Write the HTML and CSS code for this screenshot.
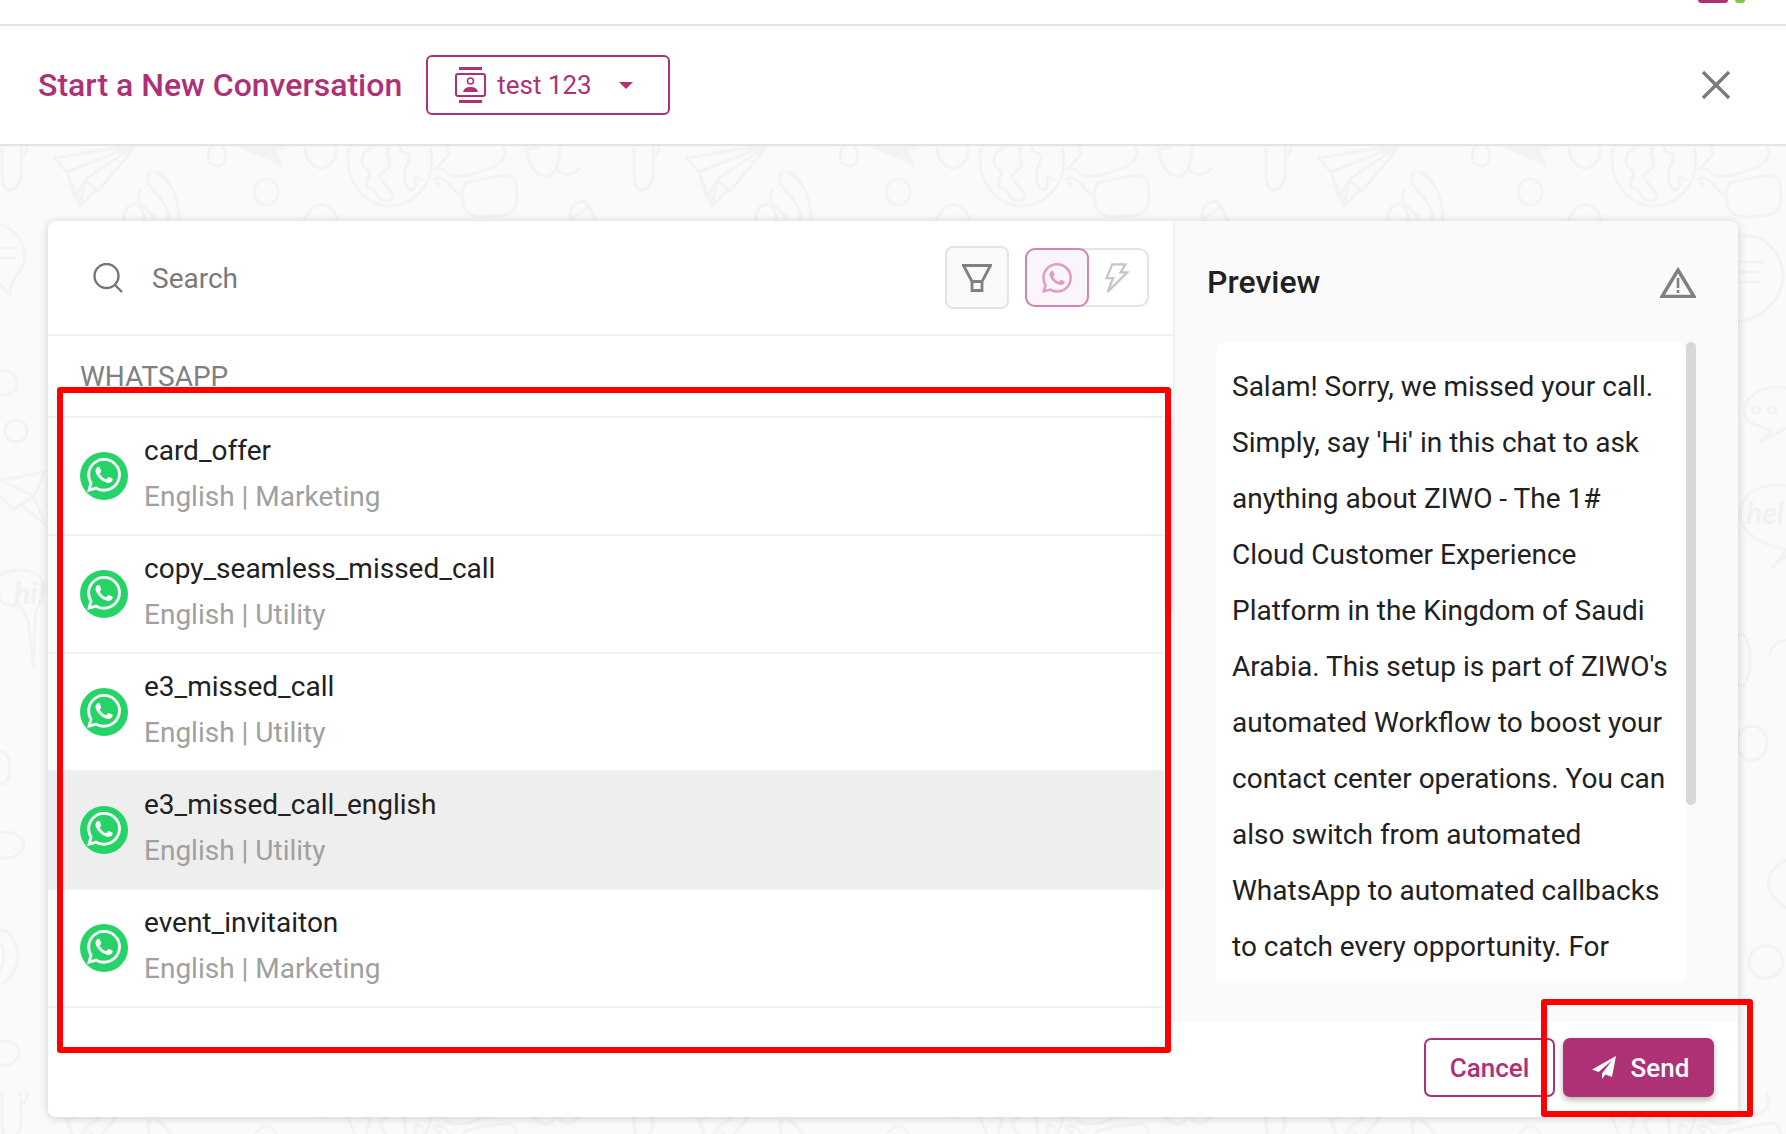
FILE: index.html
```html
<!DOCTYPE html>
<html lang="en">

<head>
	<meta charset="UTF-8">
	<title>Start a New Conversation</title>
	<link rel="stylesheet" href="styles.css">
</head>

<body>
	<svg class="icon-defs" xmlns="http://www.w3.org/2000/svg">
		<symbol id="wa" viewBox="0 0 24 24">
			<path d="M17.472 14.382c-.297-.149-1.758-.867-2.03-.967-.273-.099-.471-.148-.67.15-.197.297-.767.966-.94 1.164-.173.199-.347.223-.644.075-.297-.15-1.255-.463-2.39-1.475-.883-.788-1.48-1.761-1.653-2.059-.173-.297-.018-.458.13-.606.134-.133.298-.347.446-.52.149-.174.198-.298.298-.497.099-.198.05-.371-.025-.52-.075-.149-.669-1.612-.916-2.207-.242-.579-.487-.5-.669-.51-.173-.008-.371-.01-.57-.01-.198 0-.52.074-.792.372-.272.297-1.04 1.016-1.04 2.479 0 1.462 1.065 2.875 1.213 3.074.149.198 2.096 3.2 5.077 4.487.709.306 1.262.489 1.694.625.712.227 1.36.195 1.871.118.571-.085 1.758-.719 2.006-1.413.248-.694.248-1.289.173-1.413-.074-.124-.272-.198-.57-.347m-5.421 7.403h-.004a9.87 9.87 0 01-5.031-1.378l-.361-.214-3.741.982.998-3.648-.235-.374a9.86 9.86 0 01-1.51-5.26c.001-5.45 4.436-9.884 9.888-9.884 2.64 0 5.122 1.03 6.988 2.898a9.825 9.825 0 012.893 6.994c-.003 5.45-4.437 9.884-9.885 9.884m8.413-18.297A11.815 11.815 0 0012.05 0C5.495 0 .16 5.335.157 11.892c0 2.096.547 4.142 1.588 5.945L.057 24l6.305-1.654a11.882 11.882 0 005.683 1.448h.005c6.554 0 11.89-5.335 11.893-11.893a11.821 11.821 0 00-3.48-8.413z" />
		</symbol>
		<symbol id="wa-badge" viewBox="0 0 48 48">
			<circle cx="24" cy="24" r="24" fill="#25d366" />
			<use href="#wa" x="7" y="6" width="34" height="34" fill="#ffffff" />
		</symbol>
		<g id="doodle-tile" fill="none" stroke="#f3f3f3" stroke-width="3" stroke-linecap="round" stroke-linejoin="round">
			<path d="M2 146V176Q3 190 10 190Q19 190 21 174V146M21 157Q27 154 27 146" />
			<path d="M55 158L137 144L98 191L85 180L80 206L67 172ZM67 172L137 144L85 180M67 172L75 198L85 180M80 206L96 190" />
			<path d="M156 172C170 178 179 198 179 221M150 172C146 178 148 184 152 189C164 200 168 210 169 221M141 190C136 196 138 200 142 205C150 212 154 216 155 221" />
			<ellipse cx="134" cy="218" rx="10" ry="14" />
			<ellipse cx="217" cy="155" rx="9" ry="11" />
			<path d="M240 146L281 164L275 150L286 146Z" fill="#f3f3f3" />
			<ellipse cx="321" cy="146" rx="16" ry="22" />
			<ellipse cx="266" cy="192" rx="12" ry="13" />
			<ellipse cx="321" cy="226" rx="17" ry="21" />
			<ellipse cx="390" cy="160" rx="42" ry="46" />
			<path d="M375 146C358 152 360 166 368 170C374 174 360 184 370 188C380 192 376 204 390 200C400 196 380 182 380 176C384 168 394 170 388 158C384 152 394 146 386 146M400 146C398 156 414 150 408 162C402 172 404 190 412 190C420 186 410 170 422 180" />
			<path d="M436 168L444 170C450 180 470 176 490 168C505 162 507 155 503 146M436 168L447 157C452 152 444 148 448 146" />
			<path d="M464 184C480 178 500 176 510 175C516 176 518 190 516 205C514 214 506 216 485 217C470 217 462 212 462 196ZM462 196C452 190 446 176 436 178C432 180 436 183 440 185" />
			<path d="M526 146C528 165 536 176 546 176C556 176 560 160 560 146M524 150L538 147M558 170C566 178 574 174 579 169" />
			<path d="M571 221C568 212 572 204 582 201C588 202 592 212 596 221M572 218L587 208" />
		</g>
	</svg>

	<svg class="doodles" viewBox="0 0 1786 1134" xmlns="http://www.w3.org/2000/svg">
		<use href="#doodle-tile" />
		<use href="#doodle-tile" x="632" />
		<use href="#doodle-tile" x="1264" />
		<use href="#doodle-tile" y="948" />
		<use href="#doodle-tile" x="632" y="948" />
		<use href="#doodle-tile" x="1264" y="948" />
		<g fill="none" stroke="#f3f3f3" stroke-width="3" stroke-linecap="round" stroke-linejoin="round">
			<path d="M0 224C16 230 28 244 24 262C18 280 10 276 10 296M0 284L10 296M0 248H16M0 258H14" />
			<ellipse cx="4" cy="383" rx="13" ry="12" />
			<ellipse cx="16" cy="431" rx="11" ry="11" />
			<path d="M0 480L45 472L34 496L45 524L20 504L14 510L0 496M0 480L34 496L14 510" />
			<path d="M0 576C12 566 40 568 44 586C46 598 38 604 36 612C34 630 34 650 34 668L28 620L20 606C8 606 0 604 0 598" />
			<ellipse cx="2" cy="768" rx="8" ry="16" />
			<ellipse cx="4" cy="845" rx="20" ry="13" />
			<path d="M0 930C14 930 18 950 18 958C16 972 8 982 0 984M0 944C4 948 6 960 0 970" />
			<ellipse cx="4" cy="1053" rx="15" ry="12" />
			<path d="M1738 236C1768 232 1782 256 1783 276C1782 302 1760 318 1738 322M1740 262H1762M1740 272H1760M1740 282H1758" />
			<path d="M1786 388C1764 384 1744 396 1744 412C1746 424 1762 428 1772 430L1760 442L1786 428" />
			<ellipse cx="1756" cy="410" rx="4" ry="3" />
			<ellipse cx="1772" cy="410" rx="4" ry="3" />
			<path d="M1786 486C1766 482 1740 490 1740 516C1742 536 1764 544 1786 550L1772 568L1786 556" />
			<ellipse cx="1752" cy="743" rx="15" ry="17" />
			<path d="M1786 860C1774 866 1768 874 1768 884C1770 896 1780 904 1786 908" />
			<ellipse cx="1766" cy="962" rx="17" ry="16" />
			<ellipse cx="1742" cy="660" rx="8" ry="26" />
			<path d="M1786 640C1778 640 1770 648 1770 656" />
		</g>
		<text class="doodle-text" x="14" y="604">hi!</text>
		<text class="doodle-text" x="1746" y="524">hel</text>
	</svg>

	<div class="top-bar">
		<span class="top-avatar"></span>
		<span class="top-status"></span>
	</div>

	<header class="conv-header">
		<h1 class="conv-title">Start a New Conversation</h1>
		<button class="contact-btn" type="button">
			<svg class="contact-icon" viewBox="0 0 31 36" xmlns="http://www.w3.org/2000/svg">
				<rect x="4" y="0" width="23" height="3" fill="#ae3176" />
				<rect x="4" y="33" width="23" height="3" fill="#ae3176" />
				<rect x="1" y="7" width="29" height="22" rx="2" fill="none" stroke="#ae3176" stroke-width="2" />
				<circle cx="15.5" cy="14" r="3" fill="none" stroke="#ae3176" stroke-width="1.6" />
				<path d="M8 25C9 21 12 20 15.5 20S22 21 23 25Z" fill="#ae3176" />
			</svg>
			<span class="contact-name">test 123</span>
			<span class="caret"></span>
		</button>
		<svg class="close-icon" viewBox="0 0 28 28" xmlns="http://www.w3.org/2000/svg">
			<path d="M1 1L27 27M27 1L1 27" stroke="#7a7a7a" stroke-width="3.4" />
		</svg>
	</header>

	<main class="stage">
		<section class="card">
			<div class="card-body">
				<div class="templates">
					<div class="search-row">
						<svg class="search-icon" viewBox="0 0 30 30" xmlns="http://www.w3.org/2000/svg">
							<circle cx="13.5" cy="13" r="12" fill="none" stroke="#757575" stroke-width="2.4" />
							<path d="M22 22L29 29" stroke="#757575" stroke-width="2.4" />
						</svg>
						<span class="search-text">Search</span>
						<button class="filter-btn" type="button">
							<svg viewBox="0 0 30 28" xmlns="http://www.w3.org/2000/svg">
								<path d="M1.5 1.5H28.5L20 17.5H10ZM10 17.5H20V26.5H10Z" fill="none" stroke="#808080" stroke-width="2.8" />
							</svg>
						</button>
						<div class="channel-toggle">
							<span class="channel channel-active">
								<svg viewBox="0 0 24 24" xmlns="http://www.w3.org/2000/svg">
									<use href="#wa" fill="#e09cc4" />
								</svg>
							</span>
							<span class="channel channel-off">
								<svg viewBox="0 0 24 32" xmlns="http://www.w3.org/2000/svg">
									<path d="M8 1.5H22L17 10H24L3 31L9 16H2Z" fill="none" stroke="#c6c6c6" stroke-width="2.4" stroke-linejoin="miter" />
								</svg>
							</span>
						</div>
					</div>

					<div class="section-label">WHATSAPP</div>

					<div class="list-wrap">
						<ul class="template-list">
							<li class="template">
								<svg class="wa-badge"><use href="#wa-badge" /></svg>
								<div class="template-text">
									<div class="template-name">card_offer</div>
									<div class="template-meta">English | Marketing</div>
								</div>
							</li>
							<li class="template">
								<svg class="wa-badge"><use href="#wa-badge" /></svg>
								<div class="template-text">
									<div class="template-name">copy_seamless_missed_call</div>
									<div class="template-meta">English | Utility</div>
								</div>
							</li>
							<li class="template">
								<svg class="wa-badge"><use href="#wa-badge" /></svg>
								<div class="template-text">
									<div class="template-name">e3_missed_call</div>
									<div class="template-meta">English | Utility</div>
								</div>
							</li>
							<li class="template template-hover">
								<svg class="wa-badge"><use href="#wa-badge" /></svg>
								<div class="template-text">
									<div class="template-name">e3_missed_call_english</div>
									<div class="template-meta">English | Utility</div>
								</div>
							</li>
							<li class="template">
								<svg class="wa-badge"><use href="#wa-badge" /></svg>
								<div class="template-text">
									<div class="template-name">event_invitaiton</div>
									<div class="template-meta">English | Marketing</div>
								</div>
							</li>
						</ul>
						<div class="list-scroll"><div class="list-thumb"></div></div>
					</div>
				</div>

				<aside class="preview">
					<div class="preview-head">
						<h2 class="preview-title">Preview</h2>
						<svg class="warn-icon" viewBox="0 0 36 31" xmlns="http://www.w3.org/2000/svg">
							<path d="M18 3L34 29.5H2Z" fill="none" stroke="#808080" stroke-width="3.4" />
							<path d="M18 11V21M18 23V26" stroke="#808080" stroke-width="2.6" />
						</svg>
					</div>
					<div class="preview-body">
						<p class="preview-text">Salam! Sorry, we missed your call. Simply, say 'Hi' in this chat to ask anything about ZIWO - The 1# Cloud Customer Experience Platform in the Kingdom of Saudi Arabia. This setup is part of ZIWO's automated Workflow to boost your contact center operations. You can also switch from automated WhatsApp to automated callbacks to catch every opportunity. For</p>
						<div class="preview-scroll"><div class="preview-thumb"></div></div>
					</div>
				</aside>
			</div>

			<footer class="card-foot">
				<button class="btn btn-outline" type="button">Cancel</button>
				<button class="btn btn-fill" type="button">
					<svg class="send-icon" viewBox="0 0 24 23" xmlns="http://www.w3.org/2000/svg">
						<path d="M24 0L0 13.5L6.5 16L20 4.5L10 17.5V23L13.5 18.5L20 21Z" fill="#ffffff" />
					</svg>
					Send
				</button>
			</footer>
		</section>
	</main>

	<div class="mark mark-list"></div>
	<div class="mark mark-send"></div>
</body>

</html>
```
FILE: styles.css
```css
:root {
	--brand: #ae3176;
	--line: #e4e4e4;
	--line-soft: #f0f0f0;
	--text: #212121;
	--muted: #a0a0a0;
	--grey: #7a7a7a;
	--panel: #fafafa;
}

* {
	box-sizing: border-box;
}

html,
body {
	height: 100%;
}

body {
	margin: 0;
	height: 1134px;
	overflow: hidden;
	position: relative;
	font-family: Roboto, "Liberation Sans", sans-serif;
	color: var(--text);
	background-color: var(--panel);
}

button {
	font-family: inherit;
	cursor: pointer;
}

.icon-defs {
	position: absolute;
	width: 0;
	height: 0;
}

.doodles {
	position: absolute;
	left: 0;
	top: 0;
	width: 1786px;
	height: 1134px;
}

.doodle-text {
	font-family: Lato, sans-serif;
	font-size: 30px;
	font-weight: 700;
	font-style: italic;
	fill: #f1f1f1;
}

.top-bar {
	position: relative;
	height: 26px;
	background-color: #fff;
	border-bottom: 2px solid var(--line);
	display: flex;
	justify-content: flex-end;
	align-items: flex-start;
	gap: 7px;
	padding-right: 41px;
}

.top-avatar {
	width: 30px;
	height: 3px;
	background-color: var(--brand);
	border-radius: 0 0 15px 15px;
}

.top-status {
	width: 10px;
	height: 3px;
	background-color: #8bc34a;
	border-radius: 0 0 6px 6px;
}

.conv-header {
	position: relative;
	height: 120px;
	background-color: #fff;
	border-bottom: 2px solid var(--line);
	display: flex;
	align-items: center;
	padding: 0 56px 0 38px;
}

.conv-title {
	margin: 0;
	font-size: 32px;
	font-weight: 500;
	color: var(--brand);
}

.contact-btn {
	margin-left: 24px;
	width: 244px;
	height: 60px;
	background-color: #fff;
	border: 2px solid var(--brand);
	border-radius: 6px;
	display: flex;
	align-items: center;
	padding: 0 0 0 27px;
	color: var(--brand);
}

.contact-icon {
	width: 31px;
	height: 36px;
	flex-shrink: 0;
}

.contact-name {
	margin-left: 11px;
	font-size: 26px;
	font-weight: 400;
}

.caret {
	margin-left: 27px;
	border-left: 7px solid transparent;
	border-right: 7px solid transparent;
	border-top: 7px solid var(--brand);
}

.close-icon {
	margin-left: auto;
	width: 28px;
	height: 28px;
}

.stage {
	position: relative;
	padding: 75px 48px 0;
}

.card {
	height: 896px;
	background-color: #fff;
	border-radius: 8px;
	box-shadow: 0 1px 10px rgba(0, 0, 0, 0.18);
	display: flex;
	flex-direction: column;
	overflow: hidden;
}

.card-body {
	flex-grow: 1;
	display: flex;
	min-height: 0;
}

.templates {
	width: 1125px;
	display: flex;
	flex-direction: column;
}

.search-row {
	height: 115px;
	border-bottom: 2px solid var(--line-soft);
	display: flex;
	align-items: center;
	padding: 0 24px 0 45px;
}

.search-icon {
	width: 30px;
	height: 30px;
	flex-shrink: 0;
}

.search-text {
	margin-left: 29px;
	margin-right: auto;
	padding-top: 2px;
	font-size: 28px;
	color: var(--grey);
}

.filter-btn {
	width: 64px;
	height: 63px;
	padding: 0;
	background-color: var(--panel);
	border: 2px solid var(--line);
	border-radius: 8px;
	display: flex;
	align-items: center;
	justify-content: center;
}

.filter-btn svg {
	width: 30px;
	height: 28px;
}

.channel-toggle {
	margin-left: 16px;
	width: 124px;
	height: 59px;
	border: 2px solid var(--line);
	border-radius: 10px;
	display: flex;
	align-items: center;
}

.channel {
	height: 59px;
	width: 58px;
	display: flex;
	align-items: center;
	justify-content: center;
}

.channel svg {
	width: 30px;
	height: 30px;
}

.channel-off {
	padding-right: 4px;
}

.channel-active {
	width: 64px;
	margin-left: -2px;
	background-color: #faf5fa;
	border: 2px solid #d184b2;
	border-radius: 10px;
}

.section-label {
	height: 80px;
	padding: 25px 0 0 32px;
	font-size: 28px;
	line-height: 32px;
	color: #808080;
}

.list-wrap {
	flex-grow: 1;
	display: flex;
	min-height: 0;
}

.template-list {
	list-style: none;
	margin: 0;
	padding: 0;
	flex-grow: 1;
}

.template {
	height: 118px;
	border-top: 2px solid var(--line-soft);
	display: flex;
	align-items: center;
	padding-left: 32px;
	gap: 16px;
}

.template:last-child {
	border-bottom: 2px solid var(--line-soft);
	height: 120px;
}

.template-hover {
	background-color: #eeeeee;
}

.wa-badge {
	width: 48px;
	height: 48px;
	flex-shrink: 0;
}

.template-text {
	padding-bottom: 4px;
}

.template-name {
	font-size: 28px;
	line-height: 46px;
	color: var(--text);
}

.template-meta {
	font-size: 28px;
	line-height: 46px;
	color: var(--muted);
}

.list-scroll {
	width: 9px;
	flex-shrink: 0;
}

.list-thumb {
	height: 200px;
	background-color: #f0f0f0;
	border-radius: 5px;
}

.preview {
	flex-grow: 1;
	background-color: var(--panel);
	border-left: 2px solid var(--line-soft);
	display: flex;
	flex-direction: column;
}

.preview-head {
	height: 121px;
	display: flex;
	align-items: center;
	padding: 1px 42px 0 32px;
	justify-content: space-between;
}

.preview-title {
	margin: 0;
	font-size: 32px;
	font-weight: 500;
	color: var(--text);
}

.warn-icon {
	width: 36px;
	height: 31px;
}

.preview-body {
	margin-left: 41px;
	width: 480px;
	height: 640px;
	display: flex;
}

.preview-text {
	margin: 0;
	width: 470px;
	height: 640px;
	overflow: hidden;
	background-color: #fff;
	border-radius: 10px 10px 0 0;
	padding: 17px 10px 0 16px;
	font-size: 28px;
	line-height: 56px;
	color: var(--text);
}

.preview-scroll {
	width: 10px;
	flex-shrink: 0;
}

.preview-thumb {
	height: 463px;
	background-color: #d8d8d8;
	border-radius: 5px;
}

.card-foot {
	height: 95px;
	flex-shrink: 0;
	background-color: #fff;
	display: flex;
	justify-content: flex-end;
	gap: 8px;
	padding: 16px 24px 0 0;
}

.btn {
	height: 59px;
	font-size: 26px;
	font-weight: 500;
	border-radius: 7px;
	display: flex;
	align-items: center;
	justify-content: center;
}

.btn-outline {
	width: 131px;
	background-color: #fff;
	border: 2px solid var(--brand);
	color: var(--brand);
}

.btn-fill {
	width: 151px;
	gap: 15px;
	padding-left: 10px;
	background-color: var(--brand);
	border: none;
	color: #fff;
	box-shadow: 0 3px 6px rgba(0, 0, 0, 0.3);
}

.send-icon {
	width: 24px;
	height: 23px;
}

/* red annotation boxes drawn over the shot */
.mark {
	position: absolute;
	border-style: solid;
	border-color: #ff0000;
	border-radius: 3px;
}

.mark-list {
	left: 57px;
	top: 387px;
	width: 1114px;
	height: 666px;
	border-width: 6px;
}

.mark-send {
	left: 1541px;
	top: 999px;
	width: 212px;
	height: 118px;
	border-width: 6px;
}
```
